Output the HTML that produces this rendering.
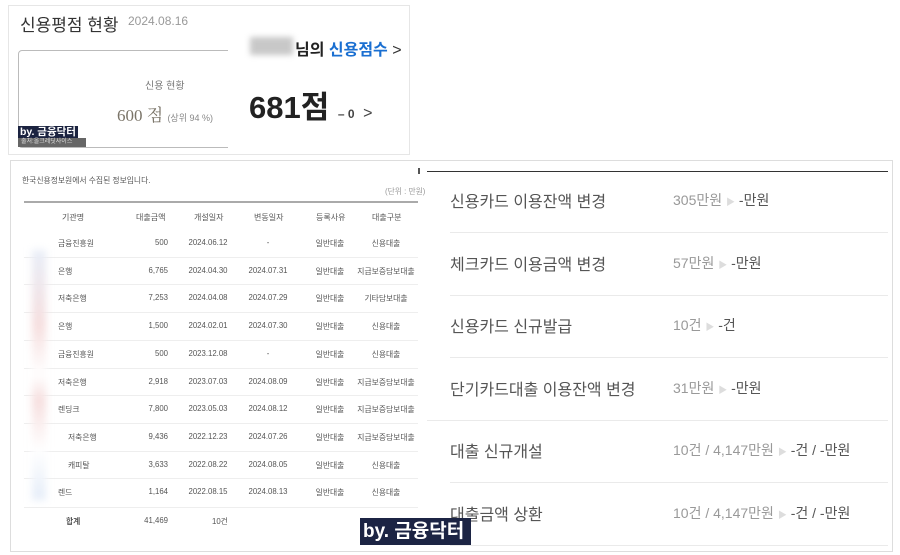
<!DOCTYPE html>
<html><head><meta charset="utf-8"><style>
*{margin:0;padding:0;box-sizing:border-box}
body{width:900px;height:555px;background:#fff;position:relative;overflow:hidden;font-family:"Liberation Sans","Noto Sans CJK KR",sans-serif;color:#333}
.a{position:absolute;white-space:nowrap}
.t{font-size:7.8px;color:#555}
</style></head><body>
<div class="a" style="left:8px;top:5px;width:402px;height:150px;border:1px solid #e6e6e6"></div>
<div class="a" style="left:20px;top:11px;font-size:17px;color:#333">신용평점 현황</div>
<div class="a" style="left:128px;top:14px;font-size:12px;color:#999">2024.08.16</div>
<div class="a" style="left:18px;top:50px;width:230px;height:98px;border:1px solid #bbb;border-radius:4px"></div>
<div class="a" style="left:145px;top:77px;font-size:10px;color:#777">신용 현황</div>
<div class="a" style="left:117px;top:101px;font-size:17px;color:#7a7468;font-family:'Liberation Serif','Noto Serif CJK SC',serif">600 점 <span style="font-size:9px;color:#888;font-family:'Liberation Sans','Noto Sans CJK KR',sans-serif">(상위 94 %)</span></div>
<div class="a" style="left:228px;top:28px;width:181px;height:126px;background:#fff"></div>
<div class="a" style="left:250px;top:37px;width:43px;height:18px;background:#c8c8c8;filter:blur(3px)"></div>
<div class="a" style="left:295px;top:36px;font-size:16px;font-weight:bold;color:#222">님의 <span style="color:#1a6fd1">신용점수</span> <span style="font-weight:normal;color:#333">&gt;</span></div>
<div class="a" style="left:249px;top:82px;font-size:31px;font-weight:bold;color:#222">681점 <span style="font-size:12px;color:#444">– 0</span> <span style="font-size:16px;font-weight:normal;color:#444">&gt;</span></div>
<div class="a" style="left:18px;top:126px;height:12px;padding:0 2px;background:#1b2340;color:#fff;font-size:10.5px;line-height:12px;font-weight:bold">by. 금융닥터</div>
<div class="a" style="left:18px;top:138px;width:68px;height:9px;background:#666;color:#ddd;font-size:6px;line-height:9px;padding-left:3px">출처:올크레딧사이스</div>

<div class="a" style="left:10px;top:160px;width:883px;height:392px;border:1px solid #ddd"></div>
<div class="a t" style="left:22px;top:175px">한국신용정보원에서 수집된 정보입니다.</div>
<div class="a t" style="left:385px;top:186px;color:#999">(단위 : 만원)</div>
<div class="a" style="left:24px;top:201px;width:394px;height:2px;background:#aaa"></div>
<div class="a" style="left:418px;top:168px;width:2px;height:6px;background:#555"></div>

<div class="a t" style="left:24px;top:212px;width:394px;font-size:8px">
<span class="a" style="left:38px">기관명</span><span class="a" style="left:112px">대출금액</span><span class="a" style="left:170px">개설일자</span><span class="a" style="left:230px">변동일자</span><span class="a" style="left:292px">등록사유</span><span class="a" style="left:348px">대출구분</span></div>

<div id="rows"></div>
<div class="a" style="left:32px;top:250px;width:14px;height:250px;background:linear-gradient(#e8eef8,#f6dede 30%,#fff 50%,#f6dede 60%,#fff 80%,#e4ecf8);filter:blur(4px)"></div>

<div class="a" style="left:427px;top:171px;width:461px;height:1px;background:#333"></div>
<div id="rl"></div>

<div class="a" style="left:360px;top:518px;width:111px;height:27px;background:#1c2444;color:#fff;font-size:19px;line-height:27px;padding-left:3px;font-weight:bold">by. 금융닥터</div>

<script>
var d=[["금융진흥원","500","2024.06.12","-","일반대출","신용대출"],["은행","6,765","2024.04.30","2024.07.31","일반대출","지급보증담보대출"],["저축은행","7,253","2024.04.08","2024.07.29","일반대출","기타담보대출"],["은행","1,500","2024.02.01","2024.07.30","일반대출","신용대출"],["금융진흥원","500","2023.12.08","-","일반대출","신용대출"],["저축은행","2,918","2023.07.03","2024.08.09","일반대출","지급보증담보대출"],["렌딩크","7,800","2023.05.03","2024.08.12","일반대출","지급보증담보대출"],["  저축은행","9,436","2022.12.23","2024.07.26","일반대출","지급보증담보대출"],["  캐피탈","3,633","2022.08.22","2024.08.05","일반대출","신용대출"],["렌드","1,164","2022.08.15","2024.08.13","일반대출","신용대출"]];
var h="";
for(var i=0;i<d.length;i++){var y=238+i*27.7;var r=d[i];
h+='<div class="a t" style="left:'+(r[0].startsWith("  ")?68:58)+'px;top:'+y+'px">'+r[0].trim()+'</div>';
h+='<div class="a t" style="left:120px;width:48px;text-align:right;top:'+y+'px">'+r[1]+'</div>';
h+='<div class="a t" style="left:178px;width:60px;text-align:center;top:'+y+'px">'+r[2]+'</div>';
h+='<div class="a t" style="left:238px;width:60px;text-align:center;top:'+y+'px">'+r[3]+'</div>';
h+='<div class="a t" style="left:300px;width:60px;text-align:center;top:'+y+'px">'+r[4]+'</div>';
h+='<div class="a t" style="left:352px;width:68px;text-align:center;top:'+y+'px">'+r[5]+'</div>';
if(i>0)h+='<div class="a" style="left:24px;top:'+(y-9)+'px;width:394px;height:1px;background:#eee"></div>';}
h+='<div class="a" style="left:24px;top:507px;width:394px;height:1px;background:#eee"></div>';
h+='<div class="a t" style="left:66px;top:516px;font-weight:bold">합계</div><div class="a t" style="left:120px;width:48px;text-align:right;top:516px">41,469</div><div class="a t" style="left:212px;top:516px">10건</div>';
document.getElementById("rows").innerHTML=h;
var L=[["신용카드 이용잔액 변경","305만원","-만원"],["체크카드 이용금액 변경","57만원","-만원"],["신용카드 신규발급","10건","-건"],["단기카드대출 이용잔액 변경","31만원","-만원"],["대출 신규개설","10건 / 4,147만원","-건 / -만원"],["대출금액 상환","10건 / 4,147만원","-건 / -만원"]];
h="";
for(i=0;i<6;i++){var c=199+i*62.5;
h+='<div class="a" style="left:450px;top:'+(c-11)+'px;font-size:16px;color:#555">'+L[i][0]+'</div>';
h+='<div class="a" style="left:673px;top:'+(c-9)+'px;font-size:14px;color:#999">'+L[i][1]+' <span style="color:#ddd;font-size:9px">▶</span> <span style="color:#555">'+L[i][2]+'</span></div>';
h+='<div class="a" style="left:'+(i==3?427:450)+'px;top:'+(c+33)+'px;width:'+(i==3?461:438)+'px;height:1px;background:#eaeaea"></div>';}
document.getElementById("rl").innerHTML=h;
</script>
</body></html>
